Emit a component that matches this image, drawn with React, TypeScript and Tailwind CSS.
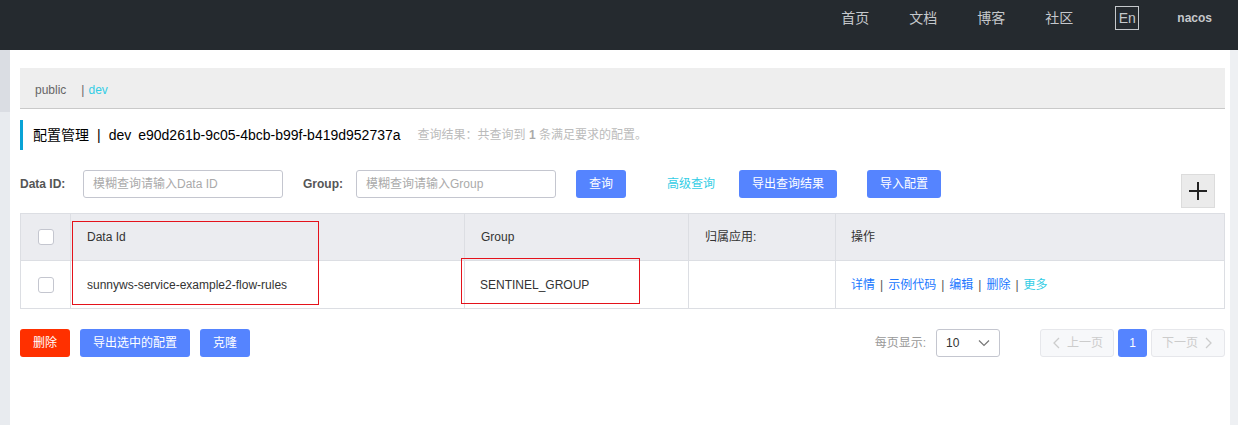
import React from 'react';

const FONT = { fontFamily: '"Liberation Sans", "Noto Sans CJK SC", sans-serif' };

const NAV_ITEMS = ['首页', '文档', '博客', '社区'];

const Header: React.FC = () => (
  <div className="h-[50px] bg-[#252a2f] flex items-start justify-end pt-[6px] pr-[26px]">
    {NAV_ITEMS.map((item) => (
      <span key={item} className="h-[24px] flex items-center text-[14px] text-[#c5c8cc] mr-[40px] leading-none">{item}</span>
    ))}
    <span className="border border-[#c5c8cc] text-[#c5c8cc] text-[14px] leading-none w-[24px] h-[24px] flex items-center justify-center mr-[38px] ml-[2px]">En</span>
    <span className="h-[24px] flex items-center text-[12px] text-[#c5c8cc] font-bold">nacos</span>
  </div>
);

const Btn: React.FC<{ children: React.ReactNode; className?: string }> = ({ children, className = '' }) => (
  <button type="button" className={`h-[28px] rounded-[3px] bg-[#5584ff] text-white text-[12px] leading-none whitespace-nowrap ${className}`}>{children}</button>
);

const Checkbox: React.FC = () => (
  <span className="inline-block w-[16px] h-[16px] border border-[#c4c6cf] rounded-[3px] bg-white" />
);

const Actions: React.FC = () => {
  const items = ['详情', '示例代码', '编辑', '删除'];
  return (
    <div className="flex items-center text-[12px]">
      {items.map((it) => (
        <React.Fragment key={it}>
          <span className="text-[#2077ff]">{it}</span>
          <span className="text-[#555] mx-[5px]">|</span>
        </React.Fragment>
      ))}
      <span className="text-[#33cde5]">更多</span>
    </div>
  );
};

export default function App() {
  return (
    <div className="w-[1238px] h-[425px] bg-white overflow-hidden text-[#333]" style={FONT}>
      <Header />
      <div className="flex h-[375px]">
        <div className="w-[10px] flex flex-col">
          <div className="h-[62px] bg-[#dadde3]" />
          <div className="flex-1 bg-[#e8ebef]" />
        </div>
        <div className="w-[1220px] pl-[10px] pr-[5px] pt-[18px]">
          {/* namespace bar */}
          <div className="h-[41px] bg-[#eeeeee] border-b border-[#c9c9c9] flex items-center pt-[3px] pl-[15px] text-[12px]">
            <span className="text-[#666]">public</span>
            <span className="text-[#666] ml-[15px] mr-[4px]">|</span>
            <span className="text-[#33cde5]">dev</span>
          </div>

          {/* title */}
          <div className="mt-[11px] h-[30px] flex items-center border-l-[3px] border-[#09a3d6] pl-[10px]">
            <span className="text-[14px] text-[#000]">配置管理</span>
            <span className="text-[14px] text-[#000] mx-[8px]">|</span>
            <span className="text-[14px] text-[#000]">dev</span>
            <span className="text-[14px] text-[#000] ml-[7px]">e90d261b-9c05-4bcb-b99f-b419d952737a</span>
            <span className="text-[12px] text-[#bbb] ml-[17px]">查询结果：共查询到 <b className="font-bold text-[#aaa]">1</b> 条满足要求的配置。</span>
          </div>

          {/* search row + plus */}
          <div className="mt-[20px] flex items-start justify-between">
            <div className="flex items-center">
              <span className="text-[12px] font-bold text-[#555] w-[63px]">Data ID:</span>
              <div className="w-[200px] h-[28px] border border-[#c4c6cf] rounded-[3px] flex items-center px-[9px] text-[12px] text-[#aaa]">模糊查询请输入Data ID</div>
              <span className="text-[12px] font-bold text-[#555] ml-[20px] w-[53px]">Group:</span>
              <div className="w-[200px] h-[28px] border border-[#c4c6cf] rounded-[3px] flex items-center px-[9px] text-[12px] text-[#aaa]">模糊查询请输入Group</div>
              <Btn className="ml-[20px] w-[50px]">查询</Btn>
              <span className="ml-[41px] text-[12px] text-[#33cde5]">高级查询</span>
              <Btn className="ml-[24px] w-[98px]">导出查询结果</Btn>
              <Btn className="ml-[30px] w-[74px]">导入配置</Btn>
            </div>
            <div className="mt-[4px] mr-[10px] w-[34px] h-[34px] bg-[#ebebeb] border border-[#dcdcdc] flex items-center justify-center">
              <svg width="20" height="20" viewBox="0 0 20 20">
                <path d="M10 1v18M1 10h18" stroke="#222" strokeWidth="2" />
              </svg>
            </div>
          </div>

          {/* table */}
          <div className="mt-[5px] border border-[#dcdee3] text-[12px]">
            <div className="flex h-[47px] bg-[#ebecf0] border-b border-[#dcdee3]">
              <div className="w-[50px] border-r border-[#dcdee3] flex items-center justify-center"><Checkbox /></div>
              <div className="w-[394px] border-r border-[#dcdee3] flex items-center pl-[16px] relative">
                Data Id
                <div className="absolute left-[1px] top-[7px] w-[247px] h-[84px] border border-[#e4121b]" />
              </div>
              <div className="w-[224px] border-r border-[#dcdee3] flex items-center pl-[16px]">Group</div>
              <div className="w-[147px] border-r border-[#dcdee3] flex items-center pl-[16px]">归属应用:</div>
              <div className="flex-1 flex items-center pl-[15px]">操作</div>
            </div>
            <div className="flex h-[47px] bg-white">
              <div className="w-[50px] border-r border-[#dcdee3] flex items-center justify-center"><Checkbox /></div>
              <div className="w-[394px] border-r border-[#dcdee3] flex items-center pl-[16px]">sunnyws-service-example2-flow-rules</div>
              <div className="w-[224px] border-r border-[#dcdee3] flex items-center pl-[15px] relative">
                SENTINEL_GROUP
                <div className="absolute -left-[4px] -top-[3px] w-[179px] h-[46px] border border-[#e4121b]" />
              </div>
              <div className="w-[147px] border-r border-[#dcdee3]" />
              <div className="flex-1 flex items-center pl-[15px]"><Actions /></div>
            </div>
          </div>

          {/* bottom row */}
          <div className="mt-[20px] flex items-center">
            <button type="button" className="h-[28px] w-[50px] rounded-[3px] bg-[#ff3000] text-white text-[12px]">删除</button>
            <Btn className="ml-[10px] w-[110px]">导出选中的配置</Btn>
            <Btn className="ml-[10px] w-[50px]">克隆</Btn>
            <div className="flex-1" />
            <span className="text-[12px] text-[#999] mr-[10px]">每页显示:</span>
            <div className="w-[64px] h-[28px] border border-[#c4c6cf] rounded-[3px] flex items-center justify-between pl-[9px] pr-[8px] text-[12px] text-[#333]">
              <span>10</span>
              <svg width="14" height="14" viewBox="0 0 14 14"><path d="M2 4.5l5 5 5-5" fill="none" stroke="#777" strokeWidth="1.2" /></svg>
            </div>
            <div className="w-[40px]" />
            <div className="w-[74px] h-[28px] border border-[#e6e7eb] bg-[#f7f8fa] rounded-[3px] flex items-center justify-center text-[12px] text-[#ccc]">
              <svg width="12" height="14" viewBox="0 0 12 14" className="mr-[4px]"><path d="M8 2L3 7l5 5" fill="none" stroke="#ccc" strokeWidth="1.3" /></svg>
              上一页
            </div>
            <div className="ml-[4px] w-[29px] h-[28px] rounded-[3px] bg-[#5584ff] text-white text-[12px] flex items-center justify-center">1</div>
            <div className="ml-[4px] w-[74px] h-[28px] border border-[#e6e7eb] bg-[#f7f8fa] rounded-[3px] flex items-center justify-center text-[12px] text-[#ccc]">
              下一页
              <svg width="12" height="14" viewBox="0 0 12 14" className="ml-[4px]"><path d="M4 2l5 5-5 5" fill="none" stroke="#ccc" strokeWidth="1.3" /></svg>
            </div>
          </div>
        </div>
        <div className="w-[8px] bg-[#eef0f3]" />
      </div>
    </div>
  );
}
